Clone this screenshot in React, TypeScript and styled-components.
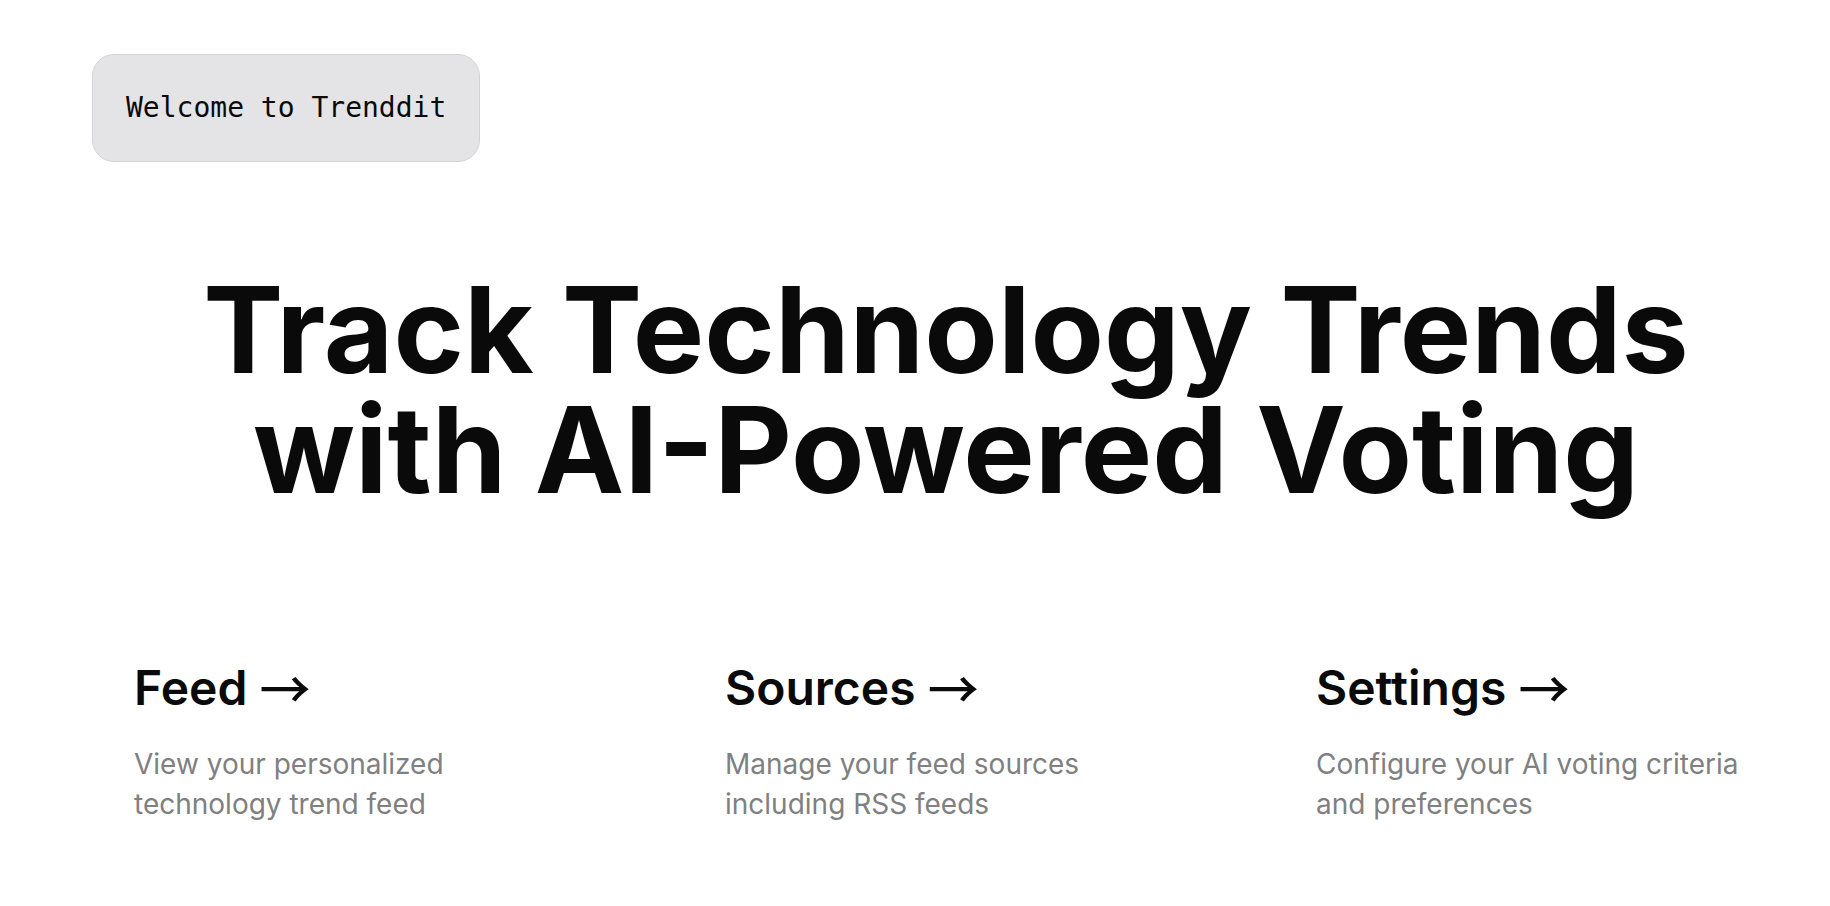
import React from "react";
import styled, { createGlobalStyle } from "styled-components";

const Global = createGlobalStyle`
  html, body { margin: 0; padding: 0; background: #ffffff; overflow: hidden; }
  body { font-family: Inter, "Noto Sans", sans-serif; color: #0a0a0a; }
  * { box-sizing: border-box; }
`;

const Page = styled.main`
  min-height: 906px;
  padding: 54px 92px 0 92px;
  display: flex;
  flex-direction: column;
`;

const TopBar = styled.div`
  display: flex;
  justify-content: flex-start;
`;

const Badge = styled.p`
  margin: 0;
  padding: 33px 33px;
  font-family: "DejaVu Sans Mono", "Liberation Mono", monospace;
  font-size: 28px;
  line-height: 40px;
  color: #0a0a0a;
  background: #e4e4e7;
  border: 1px solid #d4d4d8;
  border-radius: 22px;
`;

const Hero = styled.section`
  display: flex;
  justify-content: center;
  padding: 108px 0 0 62px;
`;

const Title = styled.h1`
  margin: 0;
  font-family: Inter, sans-serif;
  font-weight: 700;
  font-size: 120px;
  line-height: 120px;
  letter-spacing: 0;
  text-align: center;
  color: #0a0a0a;
`;

const Grid = styled.nav`
  display: grid;
  grid-template-columns: repeat(3, 450px);
  column-gap: 141px;
  padding: 148px 0 0 42px;
`;

const Card = styled.a`
  display: block;
  text-decoration: none;
  color: inherit;
`;

const CardTitle = styled.h2`
  margin: 0 0 26px 0;
  font-family: Inter, sans-serif;
  font-weight: 600;
  font-size: 48px;
  line-height: 60px;
  color: #0a0a0a;
`;

const Arrow = styled.span`
  font-family: "Noto Sans CJK JP", "Noto Sans CJK SC", sans-serif;
  font-weight: 500;
  font-size: 51px;
  line-height: 1;
  vertical-align: -4px;
`;

const CardText = styled.p`
  margin: 0;
  font-family: Inter, sans-serif;
  font-size: 28px;
  line-height: 40px;
  color: #808080;
  max-width: 440px;
`;

const cards = [
  { title: "Feed", text: "View your personalized technology trend feed" },
  { title: "Sources", text: "Manage your feed sources including RSS feeds" },
  { title: "Settings", text: "Configure your AI voting criteria and preferences" },
];

export default function App() {
  return (
    <>
      <Global />
      <Page>
        <TopBar>
          <Badge>Welcome to Trenddit</Badge>
        </TopBar>
        <Hero>
          <Title>
            Track Technology Trends
            <br />
            with AI-Powered Voting
          </Title>
        </Hero>
        <Grid>
          {cards.map((c) => (
            <Card key={c.title} href="#">
              <CardTitle>
                {c.title} <Arrow>→</Arrow>
              </CardTitle>
              <CardText>{c.text}</CardText>
            </Card>
          ))}
        </Grid>
      </Page>
    </>
  );
}
